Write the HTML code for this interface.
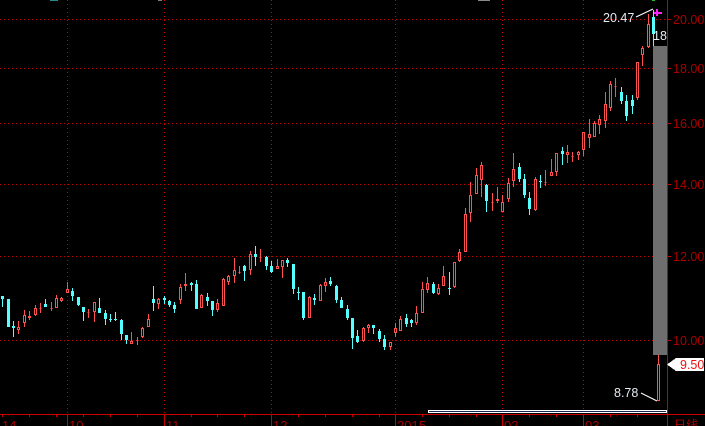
<!DOCTYPE html>
<html><head><meta charset="utf-8"><style>
html,body{margin:0;padding:0;background:#000;width:705px;height:426px;overflow:hidden}
svg{display:block}
text{font-family:"Liberation Sans","Noto Sans CJK SC",sans-serif}
</style></head><body>
<svg width="705" height="426" viewBox="0 0 705 426" shape-rendering="crispEdges">
<rect width="705" height="426" fill="#000"/>
<g stroke="#c80000" stroke-width="1" stroke-dasharray="1 3" fill="none">
<path d="M0 19.5H667M0 68.5H667M0 123.5H667M0 184.5H667M0 256.5H667M0 340.5H667"/>
<path d="M67.5 0V414M164.5 0V414M271.5 0V414M395.5 0V414M502.5 0V414M583.5 0V414"/>
</g>
<g transform="translate(.5 0)">
<path fill="none" stroke="#ff5050" d="M18 321V334M24 310V327M29 311V320M35 305V316M40 303V313M51 302V311M56 295V308M61 297V302M67 282V293M88 309V318M94 302V322M131 332V344M137 337V345M142 327V338M148 314V327M158 298V309M180 284V304M185 273V291M201 294V308M217 299V312M223 278V306M228 275V285M234 258V283M239 266V274M250 251V275M260 249V262M277 259V269M282 260V278M309 296V318M320 284V301M325 278V292M363 327V342M368 324V333M390 342V350M395 323V337M400 316V331M416 306V325M422 282V313M427 277V293M438 284V295M443 266V286M454 262V288M459 249V262M465 208V252M470 182V222M476 168V194M481 162V197M492 193V211M497 187V203M502 195V212M508 178V202M513 153V187M535 177V211M545 170V186M551 159V176M556 153V176M567 145V163M572 152V162M578 151V160M583 132V156M589 119V148M594 121V137M599 115V134M605 92V128M610 81V111M615 78V97M637 62V100M642 46V66M648 14V48M658 355V401"/>
<path fill="#000" stroke="#ff5050" d="M17 327.5h2v2h-2zM23 315.5h2v7h-2zM28 316.5h2v1h-2zM34 308.5h2v6h-2zM39 308.5h2v0h-2zM50 308.5h2v0h-2zM55 298.5h2v9h-2zM60 298.5h2v2h-2zM66 289.5h2v3h-2zM87 312.5h2v0h-2zM93 302.5h2v9h-2zM130 341.5h2v2h-2zM136 340.5h2v0h-2zM141 328.5h2v8h-2zM147 319.5h2v7h-2zM157 299.5h2v4h-2zM179 287.5h2v12h-2zM184 284.5h2v1h-2zM200 295.5h2v12h-2zM216 303.5h2v6h-2zM222 279.5h2v26h-2zM227 276.5h2v5h-2zM233 270.5h2v5h-2zM238 272.5h2v0h-2zM249 254.5h2v15h-2zM259 257.5h2v0h-2zM276 266.5h2v2h-2zM281 260.5h2v6h-2zM308 297.5h2v20h-2zM319 285.5h2v15h-2zM324 282.5h2v3h-2zM362 328.5h2v12h-2zM367 325.5h2v2h-2zM389 342.5h2v4h-2zM394 328.5h2v4h-2zM399 319.5h2v11h-2zM415 313.5h2v9h-2zM421 289.5h2v23h-2zM426 283.5h2v6h-2zM437 288.5h2v5h-2zM442 276.5h2v9h-2zM453 262.5h2v24h-2zM458 252.5h2v8h-2zM464 214.5h2v37h-2zM469 195.5h2v17h-2zM475 175.5h2v18h-2zM480 165.5h2v14h-2zM491 202.5h2v0h-2zM496 199.5h2v1h-2zM501 202.5h2v9h-2zM507 183.5h2v15h-2zM512 169.5h2v11h-2zM534 179.5h2v30h-2zM544 182.5h2v0h-2zM550 172.5h2v3h-2zM555 153.5h2v18h-2zM566 152.5h2v2h-2zM571 156.5h2v0h-2zM577 152.5h2v2h-2zM582 132.5h2v17h-2zM588 134.5h2v3h-2zM593 123.5h2v13h-2zM598 119.5h2v5h-2zM604 104.5h2v16h-2zM609 84.5h2v23h-2zM614 86.5h2v0h-2zM636 62.5h2v35h-2zM641 48.5h2v6h-2zM647 24.5h2v22h-2zM657 364.5h2v36h-2z"/>
<path fill="none" stroke="#55ffff" d="M2 296V307M13 321V337M45 299V307M72 288V301M78 297V306M83 307V321M99 298V313M105 310V325M110 314V322M115 312V321M121 319V340M126 335V344M153 286V311M164 296V304M169 300V307M174 302V313M191 282V291M196 280V309M207 293V306M212 301V316M244 265V281M255 246V266M266 256V270M271 261V273M287 258V267M293 264V294M298 287V300M303 292V320M314 294V305M330 277V286M336 285V303M341 297V308M347 305V320M352 318V349M357 330V343M373 325V334M379 329V342M384 335V350M406 314V327M411 319V327M433 282V294M449 272V295M486 184V212M519 163V182M524 174V198M529 192V215M540 175V188M562 147V165M621 87V104M626 95V121M632 95V114M653 10V46"/>
<path fill="none" stroke="#55ffff" stroke-width="3" d="M2 296V299M8 299V327M13 326V328M45 304V307M72 291V296M78 297V305M83 307V312M99 308V313M105 313V319M110 319V320M115 319V320M121 320V334M126 335V340M153 299V303M164 298V300M169 301V305M174 305V309M191 283V285M196 284V309M207 297V301M212 301V310M244 266V271M255 254V257M266 257V266M271 266V272M287 260V263M293 264V289M298 292V293M303 292V318M314 298V300M330 281V284M336 286V300M341 300V308M347 309V318M352 318V338M357 336V342M373 325V328M379 331V339M384 339V347M406 318V324M411 320V323M433 284V293M449 288V289M486 185V201M519 167V179M524 179V195M529 198V209M540 181V182M562 151V154M621 92V101M626 101V116M632 100V106M653 17V34"/>
</g>
<rect x="653" y="46" width="14" height="309" fill="#6e6e6e"/>
<text x="653" y="40" font-size="12.5" fill="#e4ecf4">18</text>
<rect x="654" y="12" width="8" height="2" fill="#ff20ff"/>
<rect x="656" y="9" width="2" height="7" fill="#ff20ff"/>
<rect x="652" y="0" width="3" height="1" fill="#20c020"/>
<rect x="478" y="0" width="12" height="1" fill="#8a8a8a"/>
<rect x="50" y="0" width="8" height="1" fill="#2a8a8a"/>
<rect x="158" y="0" width="4" height="1" fill="#7a7a7a"/>
<text x="603" y="22" font-size="12.5" fill="#e4ecf4">20.47</text>
<path d="M636 17L653 9" stroke="#fff" fill="none" shape-rendering="auto"/>
<text x="614" y="397" font-size="12.5" fill="#e4ecf4">8.78</text>
<path d="M641 393L657 401" stroke="#fff" fill="none" shape-rendering="auto"/>
<rect x="428.5" y="410.5" width="238" height="2" fill="#1a2a50" stroke="#fff"/>
<g stroke="#c80000" fill="none">
<path d="M667.5 0V426M0 414.5H705"/>
<path d="M67.5 414V426M164.5 414V426M271.5 414V426M395.5 414V426M502.5 414V426M583.5 414V426"/>
<path d="M2.5 414V417M29.5 414V417M56.5 414V417M83.5 414V417M110.5 414V417M137.5 414V417M191.5 414V417M217.5 414V417M244.5 414V417M298.5 414V417M325.5 414V417M352.5 414V417M379.5 414V417M422.5 414V417M449.5 414V417M476.5 414V417M529.5 414V417M556.5 414V417M610.5 414V417M637.5 414V417"/>
<path d="M667 19.5h4M667 68.5h4M667 123.5h4M667 184.5h4M667 256.5h4M667 340.5h4"/>
</g>
<g font-size="12.5" fill="#a80000">
<text x="673" y="24">20.00</text>
<text x="673" y="73">18.00</text>
<text x="673" y="128">16.00</text>
<text x="673" y="189">14.00</text>
<text x="673" y="261">12.00</text>
<text x="673" y="345">10.00</text>
</g>
<polygon points="667,364.5 676,358 704,358 704,371 676,371" fill="#fff"/>
<text x="680" y="369" font-size="12.5" fill="#f01010">9.50</text>
<g font-size="13" fill="#a80000">
<text x="2" y="430">14</text>
<text x="69" y="430">10</text>
<text x="166" y="430">11</text>
<text x="273" y="430">12</text>
<text x="397" y="430">2015</text>
<text x="504" y="430">02</text>
<text x="585" y="430">03</text>
<text x="674" y="429" font-size="12">日线</text>
</g>
</svg>
</body></html>
